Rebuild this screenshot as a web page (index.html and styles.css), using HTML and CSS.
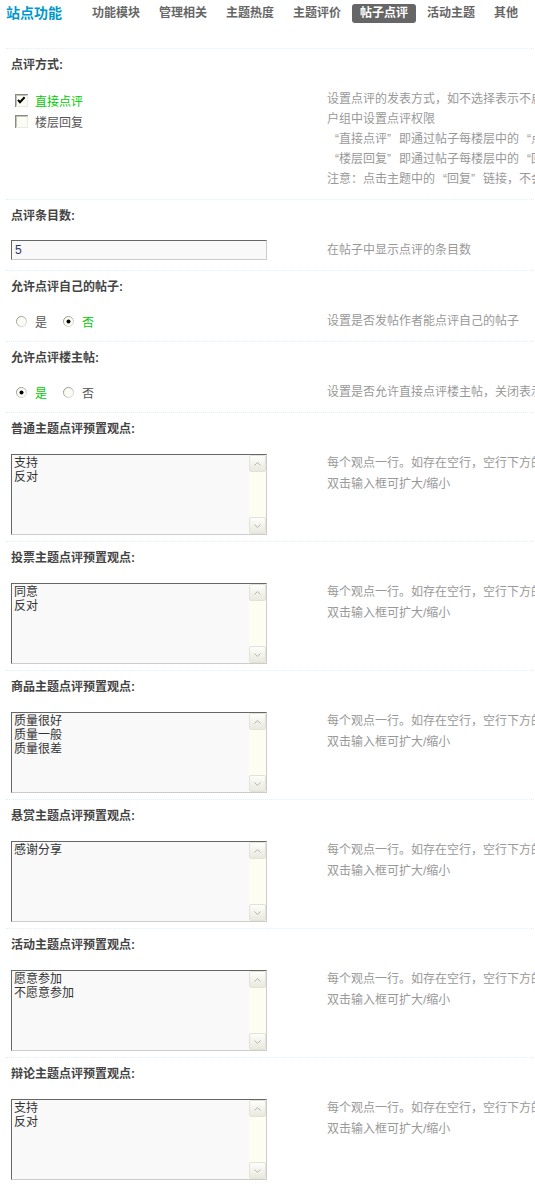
FILE: index.html
```html
<!DOCTYPE html>
<html lang="zh-CN">
<head>
    <meta charset="UTF-8">
    <meta name="viewport" content="width=device-width, initial-scale=1.0">
    <title>站点功能 - 帖子点评</title>
    <link rel="stylesheet" href="styles.css">
</head>
<body>
    <svg class="defs" width="0" height="0" aria-hidden="true">
        <defs>
            <linearGradient id="rg" x1="0" y1="0" x2="1" y2="1">
                <stop offset="0" stop-color="#85857a"/>
                <stop offset="1" stop-color="#ecebdf"/>
            </linearGradient>
        </defs>
    </svg>
    <div class="main">
        <div class="itemtitle">
            <h3>站点功能</h3>
            <ul class="tabs">
                <li>功能模块</li>
                <li>管理相关</li>
                <li>主题热度</li>
                <li>主题评价</li>
                <li class="current">帖子点评</li>
                <li>活动主题</li>
                <li>其他</li>
            </ul>
        </div>

        <div class="set">
            <div class="set-title">点评方式:</div>
            <div class="set-body">
                <div class="field">
                    <ul class="checklist">
                        <li class="opt on">
                            <svg class="ico" width="13" height="13" viewBox="0 0 13 13"><rect width="13" height="13" fill="#eceadc"/><path d="M0 0h13v1H1v12H0z" fill="#8a8a80"/><path d="M1 1h11v1H2v10H1z" fill="#c4c3b6"/><rect x="2" y="2" width="10" height="10" fill="#fcfcf7"/><path d="M3 5.8l2 2.4 4.6-5" fill="none" stroke="#000" stroke-width="2"/></svg>直接点评
                        </li>
                        <li class="opt">
                            <svg class="ico" width="13" height="13" viewBox="0 0 13 13"><rect width="13" height="13" fill="#eceadc"/><path d="M0 0h13v1H1v12H0z" fill="#8a8a80"/><path d="M1 1h11v1H2v10H1z" fill="#c4c3b6"/><rect x="2" y="2" width="10" height="10" fill="#fcfcf7"/></svg>楼层回复
                        </li>
                    </ul>
                </div>
                <div class="tips">
                    设置点评的发表方式，如不选择表示不启用点评功能，需要在用<br>
                    户组中设置点评权限<br>
                    <span class="ql">“</span>直接点评<span class="qr">”</span>即通过帖子每楼层中的<span class="ql">“</span>点评<span class="qr">”</span>链接发表点评<br>
                    <span class="ql">“</span>楼层回复<span class="qr">”</span>即通过帖子每楼层中的<span class="ql">“</span>回复<span class="qr">”</span>链接发表楼层回复<br>
                    注意：点击主题中的<span class="ql">“</span>回复<span class="qr">”</span>链接，不会以楼层回复方式发表
                </div>
            </div>
        </div>

        <div class="set">
            <div class="set-title">点评条目数:</div>
            <div class="set-body">
                <div class="field"><input class="txt" type="text" value="5"></div>
                <div class="tips">在帖子中显示点评的条目数</div>
            </div>
        </div>

        <div class="set">
            <div class="set-title">允许点评自己的帖子:</div>
            <div class="set-body">
                <div class="field">
                    <ul class="radiolist">
                        <li class="opt">
                            <svg class="ico" width="13" height="13" viewBox="0 0 13 13"><circle cx="6.5" cy="6.5" r="5" fill="#fcfcf7" stroke="url(#rg)"/></svg>是
                        </li>
                        <li class="opt on">
                            <svg class="ico" width="13" height="13" viewBox="0 0 13 13"><circle cx="6.5" cy="6.5" r="5" fill="#fcfcf7" stroke="url(#rg)"/><circle cx="6.5" cy="6.5" r="2" fill="#000"/></svg>否
                        </li>
                    </ul>
                </div>
                <div class="tips">设置是否发帖作者能点评自己的帖子</div>
            </div>
        </div>

        <div class="set">
            <div class="set-title">允许点评楼主帖:</div>
            <div class="set-body">
                <div class="field">
                    <ul class="radiolist">
                        <li class="opt on">
                            <svg class="ico" width="13" height="13" viewBox="0 0 13 13"><circle cx="6.5" cy="6.5" r="5" fill="#fcfcf7" stroke="url(#rg)"/><circle cx="6.5" cy="6.5" r="2" fill="#000"/></svg>是
                        </li>
                        <li class="opt">
                            <svg class="ico" width="13" height="13" viewBox="0 0 13 13"><circle cx="6.5" cy="6.5" r="5" fill="#fcfcf7" stroke="url(#rg)"/></svg>否
                        </li>
                    </ul>
                </div>
                <div class="tips">设置是否允许直接点评楼主帖，关闭表示只能点评回复</div>
            </div>
        </div>

        <div class="set set-area">
            <div class="set-title">普通主题点评预置观点:</div>
            <div class="set-body">
                <div class="field">
                    <div class="area">
                        <textarea rows="5">支持
反对</textarea>
                        <div class="sbar">
                            <span class="sbtn"><svg width="7" height="4" viewBox="0 0 7 4"><path d="M.5 3.5l3-3 3 3" fill="none" stroke="#b4b4aa"/></svg></span>
                            <span class="sbtn"><svg width="7" height="4" viewBox="0 0 7 4"><path d="M.5.5l3 3 3-3" fill="none" stroke="#b4b4aa"/></svg></span>
                        </div>
                    </div>
                </div>
                <div class="tips">每个观点一行。如存在空行，空行下方的内容将不显示<br>双击输入框可扩大/缩小</div>
            </div>
        </div>

        <div class="set set-area">
            <div class="set-title">投票主题点评预置观点:</div>
            <div class="set-body">
                <div class="field">
                    <div class="area">
                        <textarea rows="5">同意
反对</textarea>
                        <div class="sbar">
                            <span class="sbtn"><svg width="7" height="4" viewBox="0 0 7 4"><path d="M.5 3.5l3-3 3 3" fill="none" stroke="#b4b4aa"/></svg></span>
                            <span class="sbtn"><svg width="7" height="4" viewBox="0 0 7 4"><path d="M.5.5l3 3 3-3" fill="none" stroke="#b4b4aa"/></svg></span>
                        </div>
                    </div>
                </div>
                <div class="tips">每个观点一行。如存在空行，空行下方的内容将不显示<br>双击输入框可扩大/缩小</div>
            </div>
        </div>

        <div class="set set-area">
            <div class="set-title">商品主题点评预置观点:</div>
            <div class="set-body">
                <div class="field">
                    <div class="area">
                        <textarea rows="5">质量很好
质量一般
质量很差</textarea>
                        <div class="sbar">
                            <span class="sbtn"><svg width="7" height="4" viewBox="0 0 7 4"><path d="M.5 3.5l3-3 3 3" fill="none" stroke="#b4b4aa"/></svg></span>
                            <span class="sbtn"><svg width="7" height="4" viewBox="0 0 7 4"><path d="M.5.5l3 3 3-3" fill="none" stroke="#b4b4aa"/></svg></span>
                        </div>
                    </div>
                </div>
                <div class="tips">每个观点一行。如存在空行，空行下方的内容将不显示<br>双击输入框可扩大/缩小</div>
            </div>
        </div>

        <div class="set set-area">
            <div class="set-title">悬赏主题点评预置观点:</div>
            <div class="set-body">
                <div class="field">
                    <div class="area">
                        <textarea rows="5">感谢分享</textarea>
                        <div class="sbar">
                            <span class="sbtn"><svg width="7" height="4" viewBox="0 0 7 4"><path d="M.5 3.5l3-3 3 3" fill="none" stroke="#b4b4aa"/></svg></span>
                            <span class="sbtn"><svg width="7" height="4" viewBox="0 0 7 4"><path d="M.5.5l3 3 3-3" fill="none" stroke="#b4b4aa"/></svg></span>
                        </div>
                    </div>
                </div>
                <div class="tips">每个观点一行。如存在空行，空行下方的内容将不显示<br>双击输入框可扩大/缩小</div>
            </div>
        </div>

        <div class="set set-area">
            <div class="set-title">活动主题点评预置观点:</div>
            <div class="set-body">
                <div class="field">
                    <div class="area">
                        <textarea rows="5">愿意参加
不愿意参加</textarea>
                        <div class="sbar">
                            <span class="sbtn"><svg width="7" height="4" viewBox="0 0 7 4"><path d="M.5 3.5l3-3 3 3" fill="none" stroke="#b4b4aa"/></svg></span>
                            <span class="sbtn"><svg width="7" height="4" viewBox="0 0 7 4"><path d="M.5.5l3 3 3-3" fill="none" stroke="#b4b4aa"/></svg></span>
                        </div>
                    </div>
                </div>
                <div class="tips">每个观点一行。如存在空行，空行下方的内容将不显示<br>双击输入框可扩大/缩小</div>
            </div>
        </div>

        <div class="set set-area">
            <div class="set-title">辩论主题点评预置观点:</div>
            <div class="set-body">
                <div class="field">
                    <div class="area">
                        <textarea rows="5">支持
反对</textarea>
                        <div class="sbar">
                            <span class="sbtn"><svg width="7" height="4" viewBox="0 0 7 4"><path d="M.5 3.5l3-3 3 3" fill="none" stroke="#b4b4aa"/></svg></span>
                            <span class="sbtn"><svg width="7" height="4" viewBox="0 0 7 4"><path d="M.5.5l3 3 3-3" fill="none" stroke="#b4b4aa"/></svg></span>
                        </div>
                    </div>
                </div>
                <div class="tips">每个观点一行。如存在空行，空行下方的内容将不显示<br>双击输入框可扩大/缩小</div>
            </div>
        </div>
    </div>
</body>
</html>
```

FILE: styles.css
```css
html {
    overflow: hidden;
}
body {
    margin: 0;
    font: 12px "Liberation Sans", "Noto Sans CJK SC", sans-serif;
    color: #333;
    background: #fff;
}
.defs {
    position: absolute;
    width: 0;
    height: 0;
}
.main {
    width: 1000px;
    margin-left: 6px;
}
.itemtitle {
    display: flex;
    height: 26px;
    padding-bottom: 22px;
    border-bottom: 1px dotted #deeffb;
}
.itemtitle h3 {
    margin: 0 22px 0 0;
    font-size: 14px;
    line-height: 26px;
    color: #09c;
}
.tabs {
    display: flex;
    gap: 3px;
    margin: 4px 0 0;
    padding: 0;
    list-style: none;
}
.tabs li {
    height: 19px;
    line-height: 19px;
    padding: 0 8px;
    border-radius: 3px;
    font-weight: bold;
    color: #666;
}
.tabs li.current {
    background: #666;
    color: #fff;
}
.set {
    border-bottom: 1px dotted #deeffb;
}
.set-title {
    padding: 9px 5px 0;
    line-height: 15px;
    font-weight: bold;
    color: #444;
}
.set-body {
    display: flex;
    padding: 16px 0 10px;
}
.set-area .set-body {
    padding-bottom: 6px;
}
.field {
    flex: none;
    width: 311px;
    padding-left: 5px;
}
.tips {
    padding-left: 5px;
    line-height: 20px;
    color: #999;
    white-space: nowrap;
}
.set-area .tips {
    line-height: 21px;
}
.ql, .qr {
    display: inline-block;
    width: 12px;
}
.ql {
    text-align: right;
}
.qr {
    text-align: left;
}
.checklist, .radiolist {
    margin: 0;
    padding: 0;
    list-style: none;
}
.checklist {
    margin-top: 1px;
}
.checklist li {
    display: flex;
    align-items: center;
    height: 21px;
}
.radiolist {
    display: flex;
    height: 20px;
}
.radiolist li {
    display: flex;
    align-items: center;
    margin-right: 11px;
}
.opt {
    color: #555;
}
.opt.on {
    color: #0c0;
}
.ico {
    flex: none;
    margin: 0 7px 0 4px;
}
.txt {
    box-sizing: border-box;
    width: 256px;
    height: 20px;
    margin: 0;
    padding: 0 3px;
    border: 1px solid;
    border-color: #666 #ccc #ccc #666;
    background: #f9f9f9;
    font: inherit;
    color: #336;
    outline: none;
}
.area {
    display: flex;
    box-sizing: border-box;
    width: 256px;
    height: 81px;
    margin-top: 1px;
    border: 1px solid;
    border-color: #666 #ccc #ccc #666;
    background: #f9f9f9;
}
.area textarea {
    flex: 1;
    min-width: 0;
    margin: 0;
    padding: 1px 2px;
    border: 0;
    background: transparent;
    font: inherit;
    line-height: 14px;
    color: #333;
    resize: none;
    overflow: hidden;
    outline: none;
}
.sbar {
    flex: none;
    width: 17px;
    display: flex;
    flex-direction: column;
    justify-content: space-between;
    background: #fdfdf2;
}
.sbtn {
    display: flex;
    align-items: center;
    justify-content: center;
    box-sizing: border-box;
    height: 17px;
    border: 1px solid #e2e2d6;
    border-radius: 2px;
    background: linear-gradient(#fdfdfb, #e9e9df);
}
```
